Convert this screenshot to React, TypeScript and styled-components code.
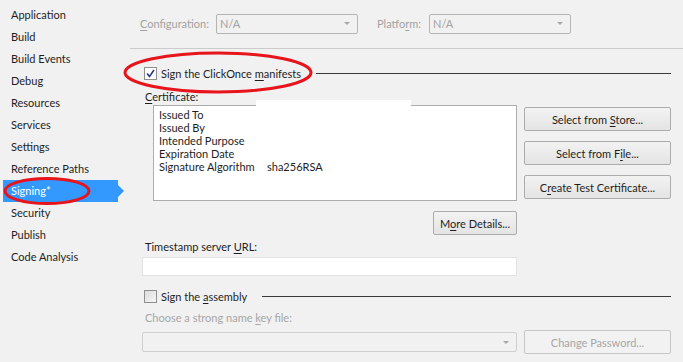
import React from "react";
import styled, { createGlobalStyle } from "styled-components";

const Global = createGlobalStyle`
  html, body { margin: 0; padding: 0; background: #f1f1f1; }
  body { font-family: Lato, "Noto Sans", sans-serif; font-size: 11px; color: #1e1e1e; }
  * { box-sizing: border-box; }
`;

const Page = styled.div`
  position: relative;
  width: 683px;
  height: 362px;
  display: flex;
  background: #f1f1f1;
  overflow: hidden;
`;

const Sidebar = styled.ul`
  list-style: none;
  margin: 0;
  padding: 4px 0 0 3px;
  width: 130px;
  flex: none;
`;

const NavItem = styled.li<{ $active?: boolean }>`
  position: relative;
  height: 22px;
  line-height: 22px;
  padding-left: 8px;
  width: 115px;
  white-space: nowrap;
  color: ${(p) => (p.$active ? "#ffffff" : "#1e1e1e")};
  background: ${(p) => (p.$active ? "#3399ff" : "transparent")};
  &::after {
    content: "";
    display: ${(p) => (p.$active ? "block" : "none")};
    position: absolute;
    right: -6px;
    top: 5px;
    border-left: 6px solid #3399ff;
    border-top: 6px solid transparent;
    border-bottom: 6px solid transparent;
  }
`;

const Main = styled.div`
  flex: 1;
  display: flex;
  flex-direction: column;
`;

const TopBar = styled.div`
  height: 49px;
  display: flex;
  align-items: center;
  padding: 0 0 1px 10px;
  border-bottom: 1px solid #cbcbcb;
`;

const TopLabel = styled.span<{ $w: number; $ml?: number }>`
  width: ${(p) => p.$w}px;
  margin-left: ${(p) => p.$ml ?? 0}px;
  color: #a2a2a2;
  flex: none;
`;

const Combo = styled.div<{ $w: number; $light?: boolean }>`
  width: ${(p) => p.$w}px;
  height: 20px;
  border: 1px solid ${(p) => (p.$light ? "#cfcfcf" : "#b4b4b4")};
  border-radius: 2px;
  display: flex;
  align-items: center;
  justify-content: space-between;
  padding: 0 7px 0 3px;
  color: #a2a2a2;
  flex: none;
`;

const ComboArrow = styled.span`
  width: 0;
  height: 0;
  border-left: 3px solid transparent;
  border-right: 3px solid transparent;
  border-top: 3px solid #a8a8a8;
`;

const Content = styled.div`
  display: flex;
  flex-direction: column;
  padding: 0 18px 0 12px;
`;

const GroupHeader = styled.div<{ $mt: number }>`
  display: flex;
  align-items: center;
  height: 16px;
  margin: ${(p) => p.$mt}px 0 0 2px;
`;

const CheckBox = styled.span<{ $checked?: boolean }>`
  width: 13px;
  height: 13px;
  flex: none;
  border: 1px solid #8e8f8f;
  background: ${(p) => (p.$checked ? "#ffffff" : "linear-gradient(135deg, #dcdcdc, #f6f6f6)")};
  display: flex;
  align-items: center;
  justify-content: center;
  margin-right: 4px;
`;

const GroupTitle = styled.span`
  white-space: nowrap;
  color: #1e1e1e;
`;

const Rule = styled.span<{ $ml: number }>`
  flex: 1;
  height: 1px;
  background: #3a3a3a;
  margin-left: ${(p) => p.$ml}px;
`;

const FieldLabel = styled.div<{ $mt: number; $disabled?: boolean }>`
  height: 16px;
  line-height: 16px;
  margin: ${(p) => p.$mt}px 0 0 3px;
  color: ${(p) => (p.$disabled ? "#a6a6a6" : "#1e1e1e")};
  white-space: nowrap;
`;

const CertRow = styled.div`
  display: flex;
  gap: 7px;
  margin-left: 11px;
`;

const CertBox = styled.div`
  position: relative;
  width: 364px;
  height: 96px;
  background: #ffffff;
  border: 1px solid #acacac;
  padding: 2px 5px;
  display: flex;
  flex-direction: column;
`;

const CertLine = styled.div`
  display: flex;
  height: 13px;
  line-height: 13px;
  white-space: nowrap;
`;

const CertKey = styled.span`
  width: 108px;
  flex: none;
`;

const Redact = styled.span`
  position: absolute;
  left: 102px;
  top: -6px;
  width: 155px;
  height: 7px;
  background: #ffffff;
`;

const ButtonCol = styled.div`
  display: flex;
  flex-direction: column;
  gap: 10px;
  padding-top: 2px;
`;

const Button = styled.button<{ $w: number; $disabled?: boolean }>`
  width: ${(p) => p.$w}px;
  height: 24px;
  padding: 0;
  font: inherit;
  border: 1px solid ${(p) => (p.$disabled ? "#c6c6c6" : "#acacac")};
  border-radius: 2px;
  color: ${(p) => (p.$disabled ? "#a6a6a6" : "#1e1e1e")};
  background: ${(p) =>
    p.$disabled ? "#f2f2f2" : "linear-gradient(#f2f2f2, #e4e4e4)"};
  flex: none;
`;

const DetailsRow = styled.div`
  width: 375px;
  display: flex;
  justify-content: flex-end;
  margin-top: 10px;
`;

const TextInput = styled.div`
  width: 375px;
  height: 19px;
  margin-top: 2px;
  background: #ffffff;
  border: 1px solid #e3e3e3;
`;

const BottomRow = styled.div`
  display: flex;
  align-items: center;
  gap: 7px;
  margin-top: 4px;
`;

const Ellipse = styled.svg<{ $l: number; $t: number }>`
  position: absolute;
  left: ${(p) => p.$l}px;
  top: ${(p) => p.$t}px;
  pointer-events: none;
  overflow: visible;
`;

const U = styled.u`
  text-underline-offset: 2px;
`;

const navItems = [
  "Application",
  "Build",
  "Build Events",
  "Debug",
  "Resources",
  "Services",
  "Settings",
  "Reference Paths",
  "Signing*",
  "Security",
  "Publish",
  "Code Analysis",
];

const certFields: [string, string][] = [
  ["Issued To", ""],
  ["Issued By", ""],
  ["Intended Purpose", ""],
  ["Expiration Date", ""],
  ["Signature Algorithm", "sha256RSA"],
];

const Check = () => (
  <svg width="9" height="9" viewBox="0 0 9 9">
    <path d="M1 4.5 L3.5 7.5 L8 1" fill="none" stroke="#233a8a" strokeWidth="1.6" />
  </svg>
);

export default function App() {
  return (
    <>
      <Global />
      <Page>
        <Sidebar>
          {navItems.map((n) => (
            <NavItem key={n} $active={n === "Signing*"}>
              {n}
            </NavItem>
          ))}
        </Sidebar>
        <Main>
          <TopBar>
            <TopLabel $w={76}>
              <U>C</U>onfiguration:
            </TopLabel>
            <Combo $w={142}>
              N/A
              <ComboArrow />
            </Combo>
            <TopLabel $w={52} $ml={19}>
              Platfo<U>r</U>m:
            </TopLabel>
            <Combo $w={142}>
              N/A
              <ComboArrow />
            </Combo>
          </TopBar>
          <Content>
            <GroupHeader $mt={16}>
              <CheckBox $checked>
                <Check />
              </CheckBox>
              <GroupTitle>
                Sign the ClickOnce <U>m</U>anifests
              </GroupTitle>
              <Rule $ml={15} />
            </GroupHeader>
            <FieldLabel $mt={8}>
              <U>C</U>ertificate:
            </FieldLabel>
            <CertRow>
              <CertBox>
                <Redact />
                {certFields.map(([k, v]) => (
                  <CertLine key={k}>
                    <CertKey>{k}</CertKey>
                    {v && <span>{v}</span>}
                  </CertLine>
                ))}
              </CertBox>
              <ButtonCol>
                <Button $w={147}>
                  Select from <U>S</U>tore...
                </Button>
                <Button $w={147}>
                  Select from F<U>i</U>le...
                </Button>
                <Button $w={147}>
                  C<U>r</U>eate Test Certificate...
                </Button>
              </ButtonCol>
            </CertRow>
            <DetailsRow>
              <Button $w={84}>
                M<U>o</U>re Details...
              </Button>
            </DetailsRow>
            <FieldLabel $mt={4}>
              Timestamp server <U>U</U>RL:
            </FieldLabel>
            <TextInput />
            <GroupHeader $mt={12}>
              <CheckBox />
              <GroupTitle>
                Sign the <U>a</U>ssembly
              </GroupTitle>
              <Rule $ml={15} />
            </GroupHeader>
            <FieldLabel $mt={6} $disabled>
              Choose a strong name <U>k</U>ey file:
            </FieldLabel>
            <BottomRow>
              <Combo $w={375} $light>
                <span />
                <ComboArrow />
              </Combo>
              <Button $w={147} $disabled>
                Change Password...
              </Button>
            </BottomRow>
          </Content>
        </Main>
        <Ellipse $l={3} $t={176} width="88" height="30">
          <ellipse cx="44" cy="15" rx="42" ry="12.5" fill="none" stroke="#e8141b" strokeWidth="3" />
        </Ellipse>
        <Ellipse $l={122} $t={51} width="192" height="43">
          <ellipse cx="96" cy="21.5" rx="93" ry="19.5" fill="none" stroke="#e8141b" strokeWidth="3" />
        </Ellipse>
      </Page>
    </>
  );
}
